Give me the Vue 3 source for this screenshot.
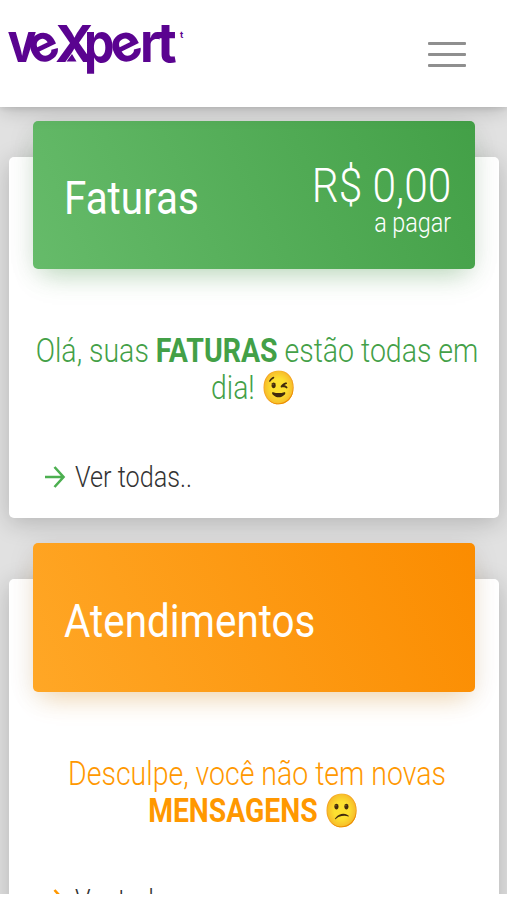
<template>
  <div class="screen">
    <header class="navbar">
      <svg class="logo" width="190" height="80" viewBox="0 0 190 80" aria-label="vexpert">
        <g fill="#5a0390">
          <text class="letter" transform="translate(7.500 62) scale(0.88 1)">v</text>
          <text class="letter e" transform="translate(36.500 66.500) rotate(-26) scale(0.9 0.94)">e</text>
          <text class="letter big" transform="translate(55 62) scale(1.03 1)">X</text>
          <text class="letter" transform="translate(84 62) scale(0.88 1)">p</text>
          <text class="letter e" transform="translate(118.500 66.500) rotate(-26) scale(0.93 0.94)">e</text>
          <text class="letter" transform="translate(140 62) scale(0.92 1)">r</text>
          <text class="letter" transform="translate(157 62) scale(0.98 1)">t</text>
          <path d="M72 54 L76.500 61.500 H66.500 Z" />
        </g>
        <text class="mark" x="180" y="38">t</text>
      </svg>
      <button class="toggler" @click="menuOpen = !menuOpen">
        <span></span>
        <span></span>
        <span></span>
      </button>
    </header>

    <main>
      <section v-for="card in cards" :key="card.title" class="card" :class="card.color">
        <div class="card-header">
          <h2>{{ card.title }}</h2>
          <div v-if="card.value" class="total">
            <span class="value">{{ card.value }}</span>
            <span class="label">{{ card.label }}</span>
          </div>
        </div>
        <div class="message">
          <p class="first">{{ card.before }} <b v-if="card.strong1">{{ card.strong1 }}</b> {{ card.after }}</p>
          <p>
            <b v-if="card.strong2">{{ card.strong2 }}</b>{{ card.end }} <span class="emoji">{{ card.emoji }}</span>
          </p>
        </div>
        <a href="#" class="more" @click.prevent>
          <svg width="22" height="24" viewBox="0 0 22 24">
            <path d="M1 12 H19 M10.500 2 L19.500 12 L10.500 22" fill="none" stroke="currentColor" stroke-width="2.600" />
          </svg>
          <span>Ver todas..</span>
        </a>
      </section>
    </main>
  </div>
</template>

<script setup>
import { ref } from 'vue';

const menuOpen = ref(false);

const cards = [
  {
    title: 'Faturas',
    color: 'green',
    value: 'R$ 0,00',
    label: 'a pagar',
    before: 'Olá, suas',
    strong1: 'FATURAS',
    after: 'estão todas em',
    end: 'dia!',
    emoji: '😉',
  },
  {
    title: 'Atendimentos',
    color: 'orange',
    before: 'Desculpe, você não tem novas',
    strong2: 'MENSAGENS',
    emoji: '😕',
  },
];
</script>

<style>
body {
  margin: 0;
  background: #fff;
}
</style>

<style scoped>
.screen {
  height: 894px;
  overflow: hidden;
  background: #e1e1e1;
  font-family: Roboto, "Noto Color Emoji", sans-serif;
  font-weight: 300;
}

.navbar {
  position: relative;
  z-index: 2;
  box-sizing: border-box;
  height: 107px;
  padding-right: 41px;
  display: flex;
  justify-content: space-between;
  align-items: center;
  background: #fff;
  box-shadow: 0 5px 18px -2px rgba(0, 0, 0, 0.2), 0 2px 5px rgba(0, 0, 0, 0.08);
}

.logo {
  align-self: flex-start;
}

.letter {
  font: 700 55px Inter, sans-serif;
}

.letter.big {
  font-size: 51px;
}

.mark {
  font: 700 9px Inter, sans-serif;
  fill: #5a0390;
}

.toggler {
  width: 38px;
  margin-top: 1px;
  padding: 0;
  border: 0;
  background: none;
  display: flex;
  flex-direction: column;
  gap: 8px;
}

.toggler span {
  height: 3px;
  border-radius: 1px;
  background: #8f8f8f;
}

main {
  padding: 50px 8px 0 9px;
}

.card {
  box-sizing: border-box;
  height: 361px;
  margin-bottom: 61px;
  padding: 0 24px;
  border-radius: 5px;
  background: #fff;
  box-shadow: 0 5px 24px rgba(0, 0, 0, 0.2);
  display: flex;
  flex-direction: column;
}

.card-header {
  box-sizing: border-box;
  height: 148px;
  flex: none;
  margin-top: -36px;
  padding: 0 24px 0 31px;
  border-radius: 5px;
  color: #fff;
  display: flex;
  justify-content: space-between;
  align-items: center;
}

.green .card-header {
  background: linear-gradient(66deg, #66bb6a, #43a047);
  box-shadow: 0 14px 26px -10px rgba(76, 175, 80, 0.35), 0 4px 28px rgba(0, 0, 0, 0.09);
}

.orange .card-header {
  height: 149px;
  background: linear-gradient(66deg, #ffa726, #fb8c00);
  box-shadow: 0 14px 26px -10px rgba(255, 152, 0, 0.3), 0 4px 28px rgba(0, 0, 0, 0.09);
}

h2 {
  margin: 6px 0 0;
  font-size: 46px;
  font-weight: 400;
  transform: scaleX(0.878);
  transform-origin: left;
}

.total {
  display: flex;
  flex-direction: column;
  align-items: flex-end;
  margin-top: 6px;
  transform: scaleX(0.865);
  transform-origin: right;
}

.value {
  font-size: 49px;
  line-height: 50px;
}

.label {
  font-size: 27px;
  line-height: 24px;
}

.message {
  margin-top: 63px;
  font-size: 33px;
  line-height: 37px;
  text-align: center;
  white-space: nowrap;
}

.message p {
  margin: 0 -60px;
  transform: scaleX(0.858);
}

.message .first {
  transform: translateX(3px) scaleX(0.863);
}

.message b {
  font-weight: 700;
}

.green .message {
  color: #43a047;
}

.orange .message {
  color: #ff9800;
}

.more {
  margin: 54px 0 0 11px;
  display: flex;
  align-items: center;
  gap: 9px;
  color: #333;
  font-size: 29px;
  line-height: 34px;
  text-decoration: none;
}

.more span {
  transform: scaleX(0.87);
  transform-origin: left;
}

.green .more svg {
  color: #4caf50;
}

.orange .more svg {
  color: #ff9800;
}
</style>
